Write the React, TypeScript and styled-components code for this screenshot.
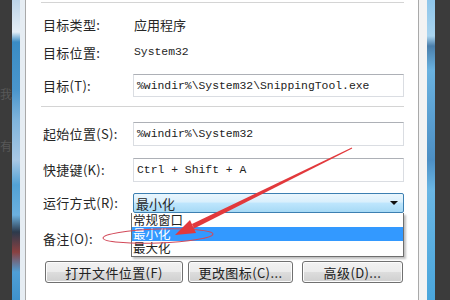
import React from 'react';
import styled, { createGlobalStyle } from 'styled-components';

const GlobalStyle = createGlobalStyle`
	html, body {
		margin: 0;
		padding: 0;
		width: 450px;
		height: 300px;
		overflow: hidden;
		background: #3b3b3b;
	}
`;

const cjk = `"Noto Sans CJK SC", "Noto Sans", sans-serif`;
const mono = `"Liberation Mono", "Noto Sans CJK SC", monospace`;

const Page = styled.div`
	position: relative;
	display: flex;
	width: 450px;
	height: 300px;
	background: #3b3b3b;
	font-family: ${cjk};
	color: #262626;
`;

const DarkEdge = styled.div<{ $width: number }>`
	width: ${(p) => p.$width}px;
	flex-shrink: 0;
	overflow: hidden;
	display: flex;
	flex-direction: column;
	align-items: flex-start;
	padding-top: 88px;
	gap: 40px;
	box-sizing: border-box;
	color: #585858;
	font-size: 12px;
	line-height: 1;
`;

const GhostChar = styled.span`
	margin-left: 0;
`;

const Frame = styled.div<{ $side: 'left' | 'right' }>`
	width: 8px;
	flex-shrink: 0;
	background: ${(p) =>
		p.$side === 'left'
			? 'linear-gradient(to bottom, #bcd4e8 0, #e4eef6 32px, #3a8cc4 42px, #4a96cc 90px, #7fb4dc 120px, #a9c8e6 160px, #52a2d6 185px, #6cb0de 215px, #2c3a4c 232px, #8a4040 252px, #4f9fd6 272px, #3f92cc 300px)'
			: 'linear-gradient(to bottom, #8fc6ea 0, #a9d4ef 36px, #4a7eaa 46px, #6ab2e0 70px, #4d8fc4 160px, #6ab6e4 190px, #4aa6dc 300px)'};
`;

const Gutter = styled.div<{ $side: 'left' | 'right' }>`
	width: ${(p) => (p.$side === 'left' ? 6 : 9)}px;
	flex-shrink: 0;
	box-sizing: border-box;
	background: ${(p) => (p.$side === 'left' ? '#e6edf3' : '#f3f3f3')};
	border-${(p) => (p.$side === 'left' ? 'right' : 'left')}: 1px solid #a9a9a9;
`;

const Dialog = styled.div`
	width: 392px;
	flex-shrink: 0;
	background: #ffffff;
	padding-left: 15px;
	box-sizing: border-box;
`;

const Content = styled.div`
	width: 363px;
	display: flex;
	flex-direction: column;
`;

const Separator = styled.div<{ $top: number }>`
	height: 1px;
	margin-top: ${(p) => p.$top}px;
	background: #d4d4d4;
`;

const Row = styled.div<{ $top: number; $height: number }>`
	position: relative;
	display: flex;
	align-items: center;
	margin-top: ${(p) => p.$top}px;
	height: ${(p) => p.$height}px;
`;

const Label = styled.div`
	width: 90px;
	padding-left: 2px;
	flex-shrink: 0;
	font-size: 13px;
	line-height: 1.2;
	letter-spacing: 0.3px;
	white-space: nowrap;
`;

const Value = styled.div<{ $mono?: boolean }>`
	padding-left: 1px;
	font-family: ${(p) => (p.$mono ? mono : cjk)};
	font-size: ${(p) => (p.$mono ? '11.4px' : '13px')};
	line-height: 1.2;
	white-space: nowrap;
`;

const TextBox = styled.div`
	flex: 1;
	align-self: stretch;
	display: flex;
	align-items: center;
	padding-left: 3px;
	box-sizing: border-box;
	border: 1px solid #dadde2;
	border-top-color: #adb0b6;
	font-family: ${mono};
	font-size: 11.4px;
	color: #222;
	white-space: nowrap;
`;

const Combo = styled.div`
	flex: 1;
	align-self: stretch;
	display: flex;
	align-items: center;
	justify-content: space-between;
	padding: 0 5px 0 2px;
	box-sizing: border-box;
	border: 1px solid #3c7fb1;
	border-radius: 2px;
	background: linear-gradient(to bottom, #eaf6fd 0%, #d9effc 45%, #bee6fd 50%, #a7d9f5 100%);
	font-size: 13px;
	line-height: 1;
`;

const ComboArrow = styled.span`
	width: 0;
	height: 0;
	border-left: 4px solid transparent;
	border-right: 4px solid transparent;
	border-top: 4px solid #111;
`;

const DropList = styled.div`
	position: absolute;
	left: 90px;
	right: 0;
	top: 100%;
	z-index: 2;
	display: flex;
	flex-direction: column;
	padding: 0 0 1px;
	background: #ffffff;
	border: 1px solid #6e6e6e;
	border-top: none;
	box-shadow: 2px 2px 2px rgba(0, 0, 0, 0.25);
`;

const DropItem = styled.div<{ $selected?: boolean }>`
	height: 14px;
	display: flex;
	align-items: center;
	padding-left: 1px;
	font-size: 12.5px;
	line-height: 1;
	background: ${(p) => (p.$selected ? '#3399ff' : 'transparent')};
	color: ${(p) => (p.$selected ? '#ffffff' : '#222')};
`;

const ButtonRow = styled.div`
	display: flex;
	margin-top: 11px;
	margin-left: 4px;
	height: 22px;
`;

const Button = styled.button<{ $width: number; $gap: number }>`
	width: ${(p) => p.$width}px;
	margin-left: ${(p) => p.$gap}px;
	height: 100%;
	padding: 0;
	border: 1px solid #707070;
	border-radius: 3px;
	background: linear-gradient(to bottom, #f2f2f2 0%, #ebebeb 50%, #dddddd 51%, #cfcfcf 100%);
	box-shadow: inset 0 0 0 1px #fcfcfc;
	font-family: ${cjk};
	font-size: 13px;
	letter-spacing: 0.4px;
	color: #222;
	line-height: 1;
`;

const Annotation = styled.svg`
	position: absolute;
	left: 0;
	top: 0;
	z-index: 5;
	pointer-events: none;
`;

const App = () => {
	return (
		<Page>
			<GlobalStyle />
			<DarkEdge $width={12}>
				<GhostChar>我</GhostChar>
				<GhostChar>有</GhostChar>
			</DarkEdge>
			<Frame $side="left" />
			<Gutter $side="left" />
			<Dialog>
				<Content>
					<Separator $top={2} />
					<Row $top={11} $height={22}>
						<Label>目标类型:</Label>
						<Value>应用程序</Value>
					</Row>
					<Row $top={6} $height={22}>
						<Label>目标位置:</Label>
						<Value $mono>System32</Value>
					</Row>
					<Row $top={10} $height={23}>
						<Label>目标(T):</Label>
						<TextBox>%windir%\System32\SnippingTool.exe</TextBox>
					</Row>
					<Separator $top={9} />
					<Row $top={15} $height={24}>
						<Label>起始位置(S):</Label>
						<TextBox>%windir%\System32</TextBox>
					</Row>
					<Row $top={12} $height={24}>
						<Label>快捷键(K):</Label>
						<TextBox>Ctrl + Shift + A</TextBox>
					</Row>
					<Row $top={11} $height={20}>
						<Label>运行方式(R):</Label>
						<Combo>
							<span>最小化</span>
							<ComboArrow />
						</Combo>
						<DropList>
							<DropItem>常规窗口</DropItem>
							<DropItem $selected>最小化</DropItem>
							<DropItem>最大化</DropItem>
						</DropList>
					</Row>
					<Row $top={15} $height={22}>
						<Label>备注(O):</Label>
						<TextBox />
					</Row>
					<ButtonRow>
						<Button $width={138} $gap={0}>打开文件位置(F)</Button>
						<Button $width={105} $gap={5}>更改图标(C)...</Button>
						<Button $width={101} $gap={9}>高级(D)...</Button>
					</ButtonRow>
				</Content>
			</Dialog>
			<Gutter $side="right" />
			<Frame $side="right" />
			<DarkEdge $width={15} />
			<Annotation width={450} height={300} viewBox="0 0 450 300">
				<ellipse cx={158} cy={236} rx={55} ry={7} fill="none" stroke="#d24a5a" strokeWidth={1} transform="rotate(-2 158 236)" />
				<polygon points="352.2,148.5 351.8,147.5 191.9,224.1 194.1,228.5" fill="#e2393c" />
				<polygon points="175,235 190,220 196,233" fill="#e2393c" />
			</Annotation>
		</Page>
	);
};

export default App;
